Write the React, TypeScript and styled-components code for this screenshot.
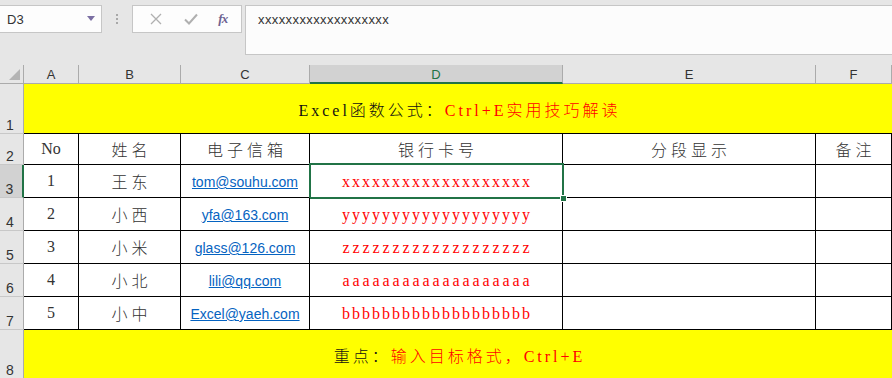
import React from "react";
import styled, { createGlobalStyle, css } from "styled-components";

const GlobalStyle = createGlobalStyle`
  html, body {
    margin: 0;
    padding: 0;
    background: #e6e6e6;
    overflow: hidden;
  }
`;

const CJK = `"Liberation Serif", "Noto Sans CJK SC", serif`;
const GREEN = "#217346";

const StyledPage = styled.div`
  width: 892px;
  height: 378px;
  overflow: hidden;
  background: #e6e6e6;
`;

/* ---------- formula bar ---------- */

const StyledTopBar = styled.div`
  display: flex;
  align-items: flex-start;
  height: 65px;
  padding-top: 5px;
  box-sizing: border-box;
`;

const StyledNameBox = styled.div`
  width: 102px;
  height: 28px;
  box-sizing: border-box;
  border: 1px solid #c6c6c6;
  border-left: none;
  background: #fdfdfd;
  display: flex;
  align-items: center;
  justify-content: space-between;
  padding: 0 6px 0 7px;
  font-family: "Liberation Sans", Arial, sans-serif;
  font-size: 13px;
  color: #333;
`;

const StyledCaret = styled.span`
  width: 0;
  height: 0;
  border-left: 4px solid transparent;
  border-right: 4px solid transparent;
  border-top: 5px solid #7b6fa3;
  margin-top: -2px;
`;

const StyledDots = styled.div`
  width: 30px;
  height: 28px;
  display: flex;
  flex-direction: column;
  align-items: center;
  justify-content: center;
  gap: 2px;

  span {
    width: 2px;
    height: 2px;
    background: #a8a8a8;
  }
`;

const StyledFnBox = styled.div`
  width: 110px;
  height: 28px;
  box-sizing: border-box;
  border: 1px solid #c6c6c6;
  background: #fdfdfd;
  display: flex;
  align-items: center;
  justify-content: space-around;
  padding: 0 4px 0 6px;
`;

const StyledFx = styled.span`
  font-family: "Liberation Serif", serif;
  font-style: italic;
  font-weight: bold;
  font-size: 13px;
  color: #6e6391;
  letter-spacing: -1px;
`;

const StyledFormulaInput = styled.div`
  flex: 1;
  margin-left: 3px;
  height: 50px;
  box-sizing: border-box;
  border: 1px solid #c6c6c6;
  border-right: none;
  background: #fcfcfc;
  padding: 6px 0 0 12px;
  font-family: "Liberation Sans", Arial, sans-serif;
  font-size: 13px;
  letter-spacing: 0.4px;
  color: #333;
`;

/* ---------- sheet ---------- */

const StyledSheet = styled.div`
  display: grid;
  grid-template-columns: 24px 55px 102px 129px 253px 253px 1fr;
  grid-template-rows: 19px 50px 31px repeat(5, 33px) 49px;
  background: #fff;
`;

const StyledCorner = styled.div`
  position: relative;
  background: #e6e6e6;
  border-right: 1px solid #ababab;
  border-bottom: 1px solid #ababab;

  &::after {
    content: "";
    position: absolute;
    right: 3px;
    bottom: 3px;
    width: 0;
    height: 0;
    border-left: 11px solid transparent;
    border-bottom: 11px solid #b4b4b4;
  }
`;

const StyledColHead = styled.div<{ $active?: boolean }>`
  background: ${(p) => (p.$active ? "#d2d2d2" : "#e6e6e6")};
  border-right: 1px solid #ababab;
  border-bottom: ${(p) => (p.$active ? `2px solid ${GREEN}` : "1px solid #ababab")};
  color: ${(p) => (p.$active ? GREEN : "#333")};
  font-family: "Liberation Sans", Arial, sans-serif;
  font-size: 13px;
  display: flex;
  align-items: center;
  justify-content: center;
  padding-top: 1px;
`;

const StyledRowHead = styled.div<{ $active?: boolean }>`
  background: ${(p) => (p.$active ? "#d2d2d2" : "#e6e6e6")};
  border-right: ${(p) => (p.$active ? `2px solid ${GREEN}` : "1px solid #ababab")};
  border-bottom: 1px solid #c8c8c8;
  color: #333;
  font-family: "Liberation Sans", Arial, sans-serif;
  font-size: 14px;
  display: flex;
  align-items: flex-end;
  justify-content: center;
  padding-right: 3px;
  line-height: 1;
  padding-bottom: 1px;
`;

const StyledBanner = styled.div<{ $bottom?: boolean }>`
  grid-column: 2 / -1;
  background: #ffff00;
  border-bottom: ${(p) => (p.$bottom ? "none" : "1px solid #000")};
  display: flex;
  align-items: center;
  justify-content: center;
  font-family: ${CJK};
  font-weight: 300;
  font-size: 16px;
  letter-spacing: 3px;
  padding-left: 3px;
  color: #111;
`;

const StyledRed = styled.span`
  color: #ff0000;
`;

const StyledCell = styled.div<{
  $kind?: "cjk" | "link" | "code";
  $selected?: boolean;
  $spacing?: number;
}>`
  position: relative;
  border-right: 1px solid #000;
  border-bottom: 1px solid #000;
  display: flex;
  align-items: center;
  justify-content: center;
  font-family: ${CJK};
  font-weight: 300;
  font-size: 16px;
  color: #333;

  ${(p) =>
    p.$kind === "cjk" &&
    css`
      letter-spacing: 4px;
      padding-left: 4px;
    `}

  ${(p) =>
    p.$kind === "link" &&
    css`
      font-family: "Liberation Sans", Arial, sans-serif;
      font-weight: 400;
      font-size: 14px;
      color: #0563c1;
      text-decoration: underline;
      text-underline-offset: 1px;
      padding-top: 2px;
    `}

  ${(p) =>
    p.$kind === "code" &&
    css`
      color: #ff0000;
      letter-spacing: ${p.$spacing ?? 2}px;
      padding-left: ${p.$spacing ?? 2}px;
      padding-top: 2px;
    `}

  ${(p) =>
    p.$selected &&
    css`
      &::after {
        content: "";
        position: absolute;
        top: -2px;
        left: -1px;
        right: -2px;
        bottom: -2px;
        border: 2px solid ${GREEN};
        pointer-events: none;
      }
      &::before {
        content: "";
        position: absolute;
        right: -5px;
        bottom: -5px;
        width: 5px;
        height: 5px;
        background: ${GREEN};
        border: 1px solid #fff;
        z-index: 1;
      }
    `}
`;

const columns = ["A", "B", "C", "D", "E", "F"];
const headers = ["No", "姓名", "电子信箱", "银行卡号", "分段显示", "备注"];

// narrower glyphs (z, a) get more spacing so every row spans the same width
const rows = [
  { no: 1, name: "王东", mail: "tom@souhu.com", code: "x".repeat(19), spacing: 2 },
  { no: 2, name: "小西", mail: "yfa@163.com", code: "y".repeat(19), spacing: 2 },
  { no: 3, name: "小米", mail: "glass@126.com", code: "z".repeat(19), spacing: 2.9 },
  { no: 4, name: "小北", mail: "lili@qq.com", code: "a".repeat(19), spacing: 2.9 },
  { no: 5, name: "小中", mail: "Excel@yaeh.com", code: "b".repeat(19), spacing: 2 },
];

const X = () => (
  <svg width="14" height="14" viewBox="0 0 14 14">
    <path d="M2 2 L12 12 M12 2 L2 12" stroke="#b0b0b0" strokeWidth="1.3" fill="none" />
  </svg>
);

const Check = () => (
  <svg width="16" height="14" viewBox="0 0 16 14">
    <path d="M2 7.5 L6 11.5 L14 2.5" stroke="#b0b0b0" strokeWidth="2" fill="none" />
  </svg>
);

const App = () => {
  return (
    <StyledPage>
      <GlobalStyle />
      <StyledTopBar>
        <StyledNameBox>
          D3
          <StyledCaret />
        </StyledNameBox>
        <StyledDots>
          <span />
          <span />
          <span />
        </StyledDots>
        <StyledFnBox>
          <X />
          <Check />
          <StyledFx>fx</StyledFx>
        </StyledFnBox>
        <StyledFormulaInput>{"x".repeat(19)}</StyledFormulaInput>
      </StyledTopBar>

      <StyledSheet>
        <StyledCorner />
        {columns.map((c) => (
          <StyledColHead key={c} $active={c === "D"}>
            {c}
          </StyledColHead>
        ))}

        <StyledRowHead>1</StyledRowHead>
        <StyledBanner>
          Excel函数公式：<StyledRed>Ctrl+E实用技巧解读</StyledRed>
        </StyledBanner>

        <StyledRowHead>2</StyledRowHead>
        {headers.map((h, i) => (
          <StyledCell key={h} $kind={i === 0 ? undefined : "cjk"}>
            {h}
          </StyledCell>
        ))}

        {rows.map((r, i) => (
          <React.Fragment key={r.no}>
            <StyledRowHead $active={i === 0}>{i + 3}</StyledRowHead>
            <StyledCell>{r.no}</StyledCell>
            <StyledCell $kind="cjk">{r.name}</StyledCell>
            <StyledCell $kind="link">{r.mail}</StyledCell>
            <StyledCell $kind="code" $spacing={r.spacing} $selected={i === 0}>
              {r.code}
            </StyledCell>
            <StyledCell />
            <StyledCell />
          </React.Fragment>
        ))}

        <StyledRowHead>8</StyledRowHead>
        <StyledBanner $bottom>
          重点：<StyledRed>输入目标格式，Ctrl+E</StyledRed>
        </StyledBanner>
      </StyledSheet>
    </StyledPage>
  );
};

export default App;
